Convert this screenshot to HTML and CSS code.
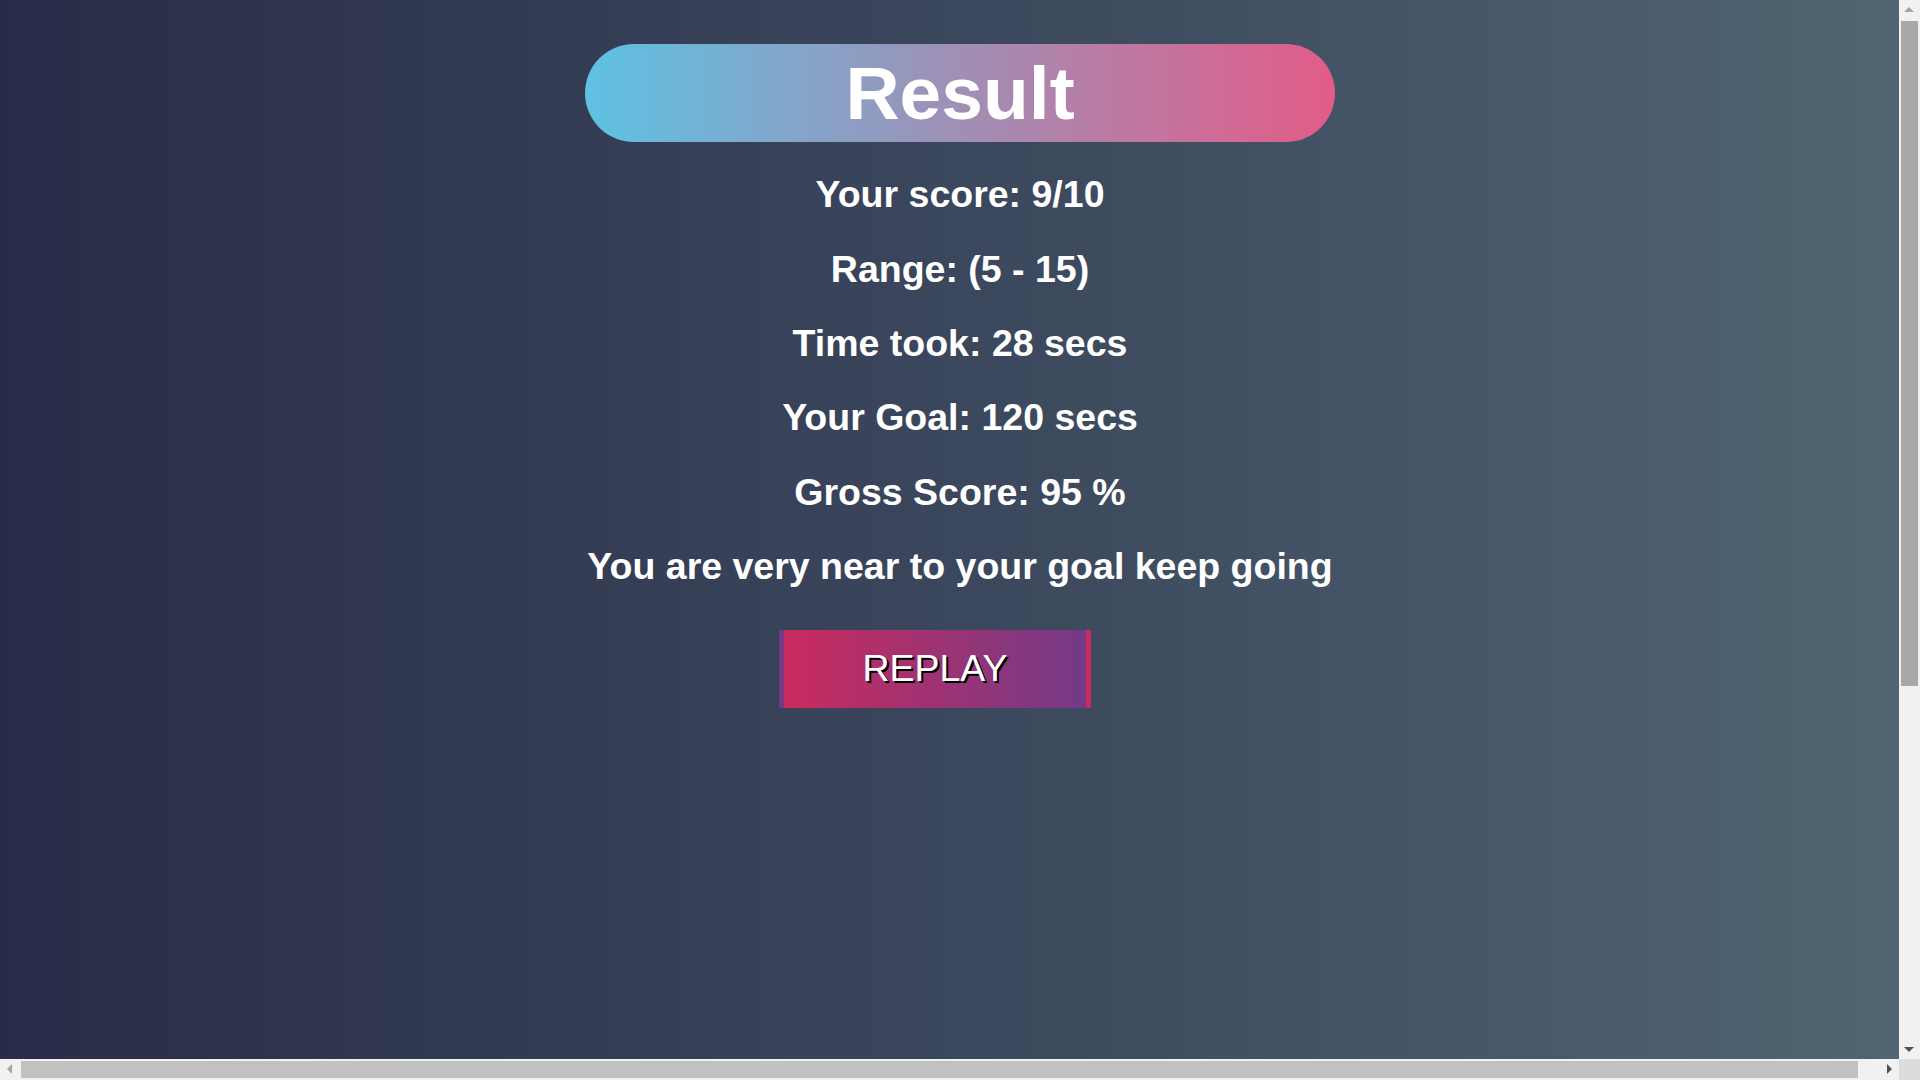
FILE: index.html
```html
<!DOCTYPE html>
<html lang="en">
<head>
<meta charset="utf-8">
<title>Result</title>
<link rel="stylesheet" href="styles.css">
</head>
<body>
<main class="result">
  <h1 class="result-title">Result</h1>
  <div class="result-lines">
    <p class="result-line">Your score: 9/10</p>
    <p class="result-line">Range: (5 - 15)</p>
    <p class="result-line">Time took: 28 secs</p>
    <p class="result-line">Your Goal: 120 secs</p>
    <p class="result-line">Gross Score: 95 %</p>
    <p class="result-line">You are very near to your goal keep going</p>
  </div>
  <button class="replay-btn" type="button">REPLAY</button>
</main>

<div class="sb-v" aria-hidden="true">
  <span class="sb-arrow sb-up"></span>
  <span class="sb-v-thumb"></span>
  <span class="sb-arrow sb-down"></span>
</div>
<div class="sb-h" aria-hidden="true">
  <span class="sb-arrow sb-left"></span>
  <span class="sb-h-thumb"></span>
  <span class="sb-arrow sb-right"></span>
</div>
<div class="sb-corner" aria-hidden="true"></div>
</body>
</html>
```

FILE: styles.css
```css
html {
  margin: 0;
  padding: 0;
}

body {
  margin: 0;
  width: 100vw;
  min-height: 1633px;
  box-sizing: border-box;
  padding-top: 44px;
  background: linear-gradient(to right, #292c48 0%, #3b475c 50%, #516572 100%);
  font-family: "Liberation Sans", Arial, sans-serif;
  color: #ffffff;
}

.result {
  display: flex;
  flex-direction: column;
  align-items: center;
}

.result-title {
  margin: 0;
  width: 750px;
  height: 98px;
  border-radius: 49px;
  background: linear-gradient(to right, #5ec2e3 0%, #e25c88 100%);
  font-size: 75px;
  line-height: 98px;
  font-weight: 700;
  text-align: center;
  color: #ffffff;
}

.result-lines {
  display: flex;
  flex-direction: column;
  align-items: center;
  gap: 31.3px;
  margin-top: 31.4px;
}

.result-line {
  margin: 0;
  font-size: 37.5px;
  line-height: 43px;
  font-weight: 700;
  text-align: center;
  white-space: nowrap;
}

.replay-btn {
  margin-top: 42.6px;
  margin-right: 50px;
  width: 312px;
  height: 78px;
  box-sizing: border-box;
  padding: 0 0 2px;
  border: none;
  border-left: 5px solid #733a87;
  border-right: 5px solid #c92b5e;
  background: linear-gradient(to right, #c92b5e 0%, #733a87 100%);
  font-family: "Liberation Sans", Arial, sans-serif;
  font-size: 37.5px;
  line-height: 76px;
  color: #ffffff;
  text-shadow: 2px 2px 0 #000000;
  cursor: pointer;
}

/* simulated browser scrollbars (overlay) */
.sb-v {
  position: fixed;
  top: 0;
  right: 0;
  width: 21px;
  height: 1059px;
  background: #f1f1f1;
}

.sb-v-thumb {
  position: absolute;
  left: 2px;
  top: 21px;
  width: 17px;
  height: 665px;
  background: #a8a8a8;
}

.sb-h {
  position: fixed;
  left: 0;
  bottom: 0;
  width: 1899px;
  height: 21px;
  background: #f1f1f1;
}

.sb-h-thumb {
  position: absolute;
  left: 21px;
  top: 2px;
  width: 1837px;
  height: 17px;
  background: #c1c1c1;
}

.sb-corner {
  position: fixed;
  right: 0;
  bottom: 0;
  width: 21px;
  height: 21px;
  background: #dcdcdc;
}

.sb-arrow {
  position: absolute;
  width: 0;
  height: 0;
}

.sb-up {
  left: 5px;
  top: 7px;
  border-left: 5.5px solid transparent;
  border-right: 5.5px solid transparent;
  border-bottom: 5.5px solid #a3a3a3;
}

.sb-down {
  left: 5px;
  bottom: 7px;
  border-left: 5.5px solid transparent;
  border-right: 5.5px solid transparent;
  border-top: 5.5px solid #505050;
}

.sb-left {
  left: 7px;
  top: 5px;
  border-top: 5.5px solid transparent;
  border-bottom: 5.5px solid transparent;
  border-right: 5.5px solid #a3a3a3;
}

.sb-right {
  right: 7px;
  top: 5px;
  border-top: 5.5px solid transparent;
  border-bottom: 5.5px solid transparent;
  border-left: 5.5px solid #505050;
}
```
